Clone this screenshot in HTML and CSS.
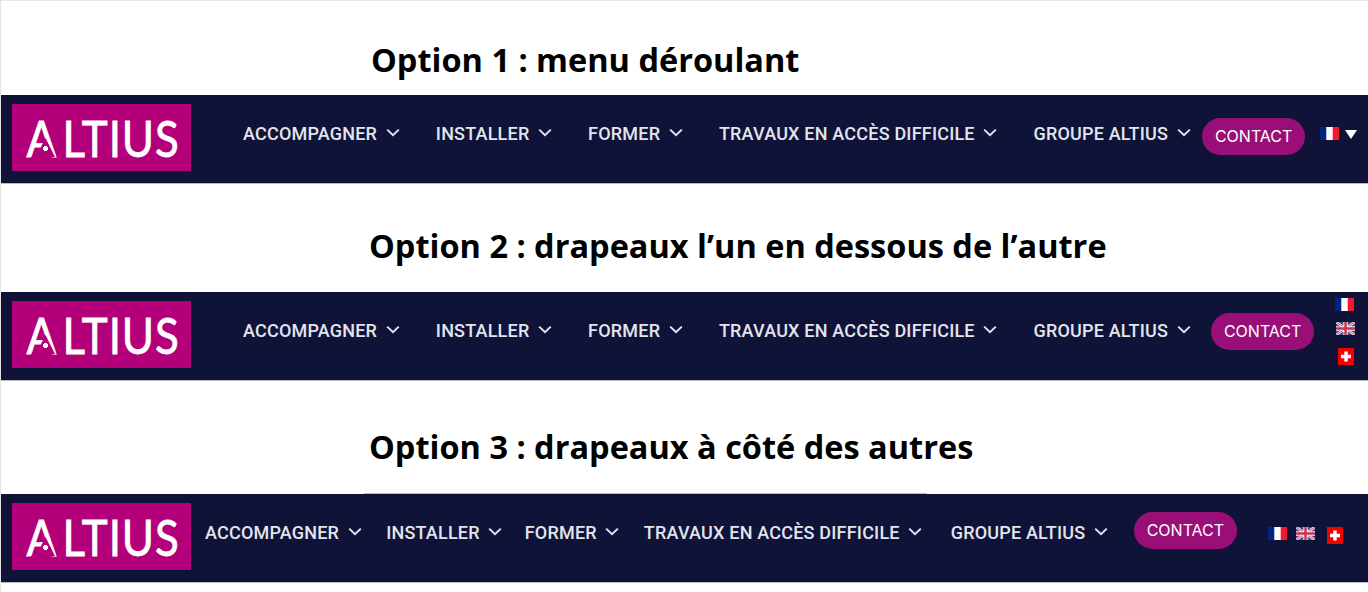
FILE: index.html
```html
<!DOCTYPE html>
<html lang="fr">
<head>
<meta charset="utf-8">
<title>Options du menu Altius</title>
<link rel="stylesheet" href="styles.css">
</head>
<body>
<svg class="defs" width="0" height="0" aria-hidden="true">
  <defs>
    <symbol id="chev" viewBox="0 0 14 9"><path d="M1.2 1.6 7 7.2l5.8-5.6" fill="none" stroke="currentColor" stroke-width="2"/></symbol>
    <symbol id="fr" viewBox="0 0 19 13"><rect width="19" height="13" fill="#fff"/><rect width="6.3" height="13" fill="#00267f"/><rect x="12.7" width="6.3" height="13" fill="#f31830"/></symbol>
    <symbol id="uk" viewBox="0 0 19 13"><rect width="19" height="13" fill="#3d4b8c"/><path d="M0 0l19 13M19 0 0 13" stroke="#eee" stroke-width="2.6"/><path d="M0 0l19 13M19 0 0 13" stroke="#c8506a" stroke-width="1"/><path d="M9.5 0v13M0 6.5h19" stroke="#eee" stroke-width="4.4"/><path d="M9.5 0v13M0 6.5h19" stroke="#cf3050" stroke-width="2.4"/></symbol>
    <symbol id="ch" viewBox="0 0 16 17"><rect width="16" height="17" fill="#f50000"/><path d="M6.3 3.5h3.4v3.3H13v3.4H9.7v3.3H6.3v-3.3H3V6.8h3.3z" fill="#fff"/></symbol>
  </defs>
</svg>

<section class="opt opt-1">
  <h2 class="title">Option 1 : menu déroulant</h2>
  <div class="bar">
    <a class="logo"><span class="logo-text"><span class="logo-a">A</span>LTIUS</span></a>
    <ul class="nav">
      <li class="item">ACCOMPAGNER <svg class="chev"><use href="#chev"/></svg></li>
      <li class="item">INSTALLER <svg class="chev"><use href="#chev"/></svg></li>
      <li class="item">FORMER <svg class="chev"><use href="#chev"/></svg></li>
      <li class="item">TRAVAUX EN ACCÈS DIFFICILE <svg class="chev"><use href="#chev"/></svg></li>
      <li class="item">GROUPE ALTIUS <svg class="chev"><use href="#chev"/></svg></li>
    </ul>
    <a class="contact">CONTACT</a>
    <div class="flags">
      <svg class="flag"><use href="#fr"/></svg>
      <span class="caret"></span>
    </div>
  </div>
</section>

<section class="opt opt-2">
  <h2 class="title">Option 2 : drapeaux l’un en dessous de l’autre</h2>
  <div class="bar">
    <a class="logo"><span class="logo-text"><span class="logo-a">A</span>LTIUS</span></a>
    <ul class="nav">
      <li class="item">ACCOMPAGNER <svg class="chev"><use href="#chev"/></svg></li>
      <li class="item">INSTALLER <svg class="chev"><use href="#chev"/></svg></li>
      <li class="item">FORMER <svg class="chev"><use href="#chev"/></svg></li>
      <li class="item">TRAVAUX EN ACCÈS DIFFICILE <svg class="chev"><use href="#chev"/></svg></li>
      <li class="item">GROUPE ALTIUS <svg class="chev"><use href="#chev"/></svg></li>
    </ul>
    <a class="contact">CONTACT</a>
    <div class="flags">
      <svg class="flag"><use href="#fr"/></svg>
      <svg class="flag flag-uk"><use href="#uk"/></svg>
      <svg class="flag flag-ch"><use href="#ch"/></svg>
    </div>
  </div>
</section>

<section class="opt opt-3">
  <h2 class="title">Option 3 : drapeaux à côté des autres</h2>
  <div class="bar">
    <a class="logo"><span class="logo-text"><span class="logo-a">A</span>LTIUS</span></a>
    <ul class="nav">
      <li class="item">ACCOMPAGNER <svg class="chev"><use href="#chev"/></svg></li>
      <li class="item">INSTALLER <svg class="chev"><use href="#chev"/></svg></li>
      <li class="item">FORMER <svg class="chev"><use href="#chev"/></svg></li>
      <li class="item">TRAVAUX EN ACCÈS DIFFICILE <svg class="chev"><use href="#chev"/></svg></li>
      <li class="item">GROUPE ALTIUS <svg class="chev"><use href="#chev"/></svg></li>
    </ul>
    <a class="contact">CONTACT</a>
    <div class="flags">
      <svg class="flag"><use href="#fr"/></svg>
      <svg class="flag flag-uk"><use href="#uk"/></svg>
      <svg class="flag flag-ch"><use href="#ch"/></svg>
    </div>
  </div>
</section>
</body>
</html>
```

FILE: styles.css
```css
* { box-sizing: border-box; }
html, body { margin: 0; padding: 0; }
body {
  width: 1368px;
  height: 592px;
  overflow: hidden;
  background: #fff;
  font-family: "Roboto", sans-serif;
  border-left: 1px solid #e4e4e4;
  border-top: 1px solid #e8e8e8;
}
.defs { position: absolute; }

.title {
  margin: 0;
  font-family: "Open Sans", sans-serif;
  font-weight: 700;
  font-size: 32.5px;
  line-height: 44px;
  color: #000;
}
.opt-1 .title { padding: 37px 0 13px 370px; }
.opt-2 .title { padding: 40px 0 24px 368px; }
.opt-3 .title { padding: 44px 0 25px 368px; }

.bar {
  position: relative;
  display: flex;
  align-items: flex-start;
  height: 89px;
  background: #101338;
  border-bottom: 1px solid #b9bac6;
  padding-left: 11px;
}
.opt-3 .bar::before {
  content: "";
  position: absolute;
  top: -1px;
  left: 363px;
  width: 563px;
  height: 1px;
  background: #b9bac6;
}

.logo {
  position: relative;
  flex: none;
  display: flex;
  align-items: center;
  justify-content: center;
  width: 179px;
  height: 67px;
  margin-top: 9px;
  background: #b3007a;
}
.logo-text {
  margin-left: 2px;
  font-family: "Lato", sans-serif;
  font-weight: 400;
  font-size: 51px;
  line-height: 1;
  letter-spacing: 1px;
  color: #fff;
  -webkit-text-stroke: 0.8px #fff;
  transform: scaleX(0.86);
}
.logo-a { letter-spacing: 7.5px; }
.logo::after {
  content: "";
  position: absolute;
  left: 24px;
  top: 34px;
  width: 19px;
  height: 19px;
  background: radial-gradient(circle 2.5px at 50% 55%, #fff 96%, transparent), #b3007a;
  clip-path: polygon(50% 0, 100% 100%, 0 100%);
}

.nav {
  display: flex;
  list-style: none;
  margin: 29px 0 0 52px;
  padding: 0;
  gap: 36.2px;
}
.item {
  display: flex;
  align-items: center;
  gap: 8.5px;
  height: 20px;
  font-size: 18px;
  font-weight: 500;
  letter-spacing: 0.2px;
  line-height: 20px;
  color: #e2e5ed;
  white-space: nowrap;
}
.chev { width: 14px; height: 9px; margin-bottom: 3px; color: #e2e5ed; }

.contact {
  flex: none;
  width: 103px;
  height: 37px;
  margin: 23px 0 0 11.5px;
  border-radius: 19px;
  background: #9a0e78;
  color: #fff;
  font-family: "Inter", sans-serif;
  font-size: 16px;
  line-height: 36px;
  text-align: center;
}

.flags { display: flex; flex: none; align-items: flex-start; }
.flag { display: block; width: 19px; height: 13px; }
.flag-ch { width: 16px; height: 17px; }

.opt-1 .flags { gap: 6px; margin: 32px 0 0 15px; }
.caret {
  width: 0;
  height: 0;
  border-left: 6px solid transparent;
  border-right: 6px solid transparent;
  border-top: 9px solid #fff;
  margin-top: 3px;
}

.opt-2 .contact { margin: 21px 0 0 20.5px; }
.opt-2 .flags { flex-direction: column; margin: 6px 0 0 21px; }
.opt-2 .flag-uk { margin: 11px 0 0 1px; }
.opt-2 .flag-ch { margin: 13px 0 0 3px; }

.opt-3 .nav { margin-left: 14px; gap: 25.5px; }
.opt-3 .item:nth-child(2) { margin-left: -1px; }
.opt-3 .item:nth-child(3) { margin-left: -3px; }
.opt-3 .item:nth-child(4) { margin-left: -1px; }
.opt-3 .item:nth-child(5) { margin-left: 3px; }
.opt-3 .contact { margin: 18px 0 0 26px; }
.opt-3 .flags { margin: 33px 0 0 31px; gap: 9px; }
.opt-3 .flag-ch { margin-left: 3px; }
```
